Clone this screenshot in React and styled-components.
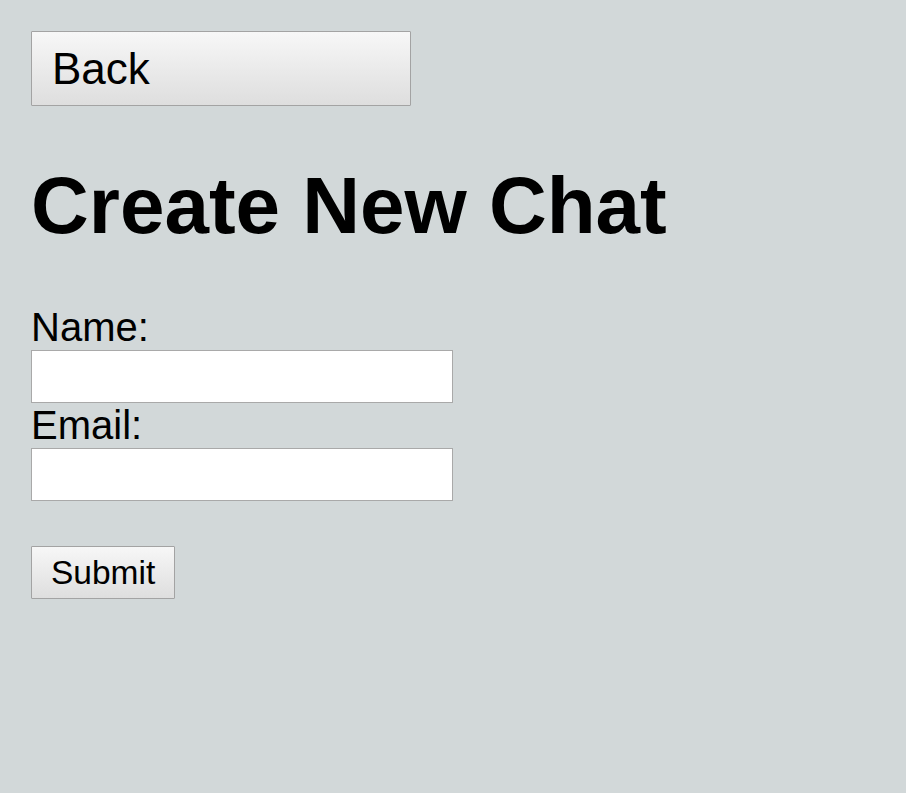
import React from "react";
import styled, { createGlobalStyle } from "styled-components";

const GlobalStyle = createGlobalStyle`
  html, body {
    margin: 0;
    padding: 0;
    background: #d2d8d9;
    font-family: "Liberation Sans", Arial, sans-serif;
    color: #000;
  }
`;

const Page = styled.div`
  min-height: 793px;
  padding: 31px;
  box-sizing: border-box;
`;

const Button = styled.button`
  display: block;
  box-sizing: border-box;
  font-family: "Liberation Sans", Arial, sans-serif;
  color: #000;
  background: linear-gradient(#f7f7f7, #dedede);
  border: 1px solid #a3a3a3;
  border-radius: 1px;
  text-align: left;
  cursor: pointer;
`;

const BackButton = styled(Button)`
  width: 380px;
  height: 75px;
  padding: 0 20px;
  font-size: 44px;
`;

const SubmitButton = styled(Button)`
  height: 53px;
  padding: 0 19px;
  font-size: 33.5px;
  margin-top: 45px;
`;

const Title = styled.h1`
  margin: 52px 0 0;
  font-size: 80px;
  font-weight: bold;
  line-height: 96px;
`;

const Form = styled.form`
  margin-top: 51px;
`;

const Label = styled.label`
  display: block;
  font-size: 40px;
  line-height: 45px;
`;

const Input = styled.input`
  display: block;
  box-sizing: border-box;
  width: 422px;
  height: 53px;
  margin: 0;
  border: 1px solid #a9a9a9;
  background: #fff;
  font-size: 30px;
  padding: 0 8px;
`;

export default function App() {
  return (
    <>
      <GlobalStyle />
      <Page>
        <BackButton type="button">Back</BackButton>
        <Title>Create New Chat</Title>
        <Form onSubmit={(e) => e.preventDefault()}>
          <Label htmlFor="name">Name:</Label>
          <Input id="name" type="text" />
          <Label htmlFor="email">Email:</Label>
          <Input id="email" type="email" />
          <SubmitButton type="submit">Submit</SubmitButton>
        </Form>
      </Page>
    </>
  );
}
